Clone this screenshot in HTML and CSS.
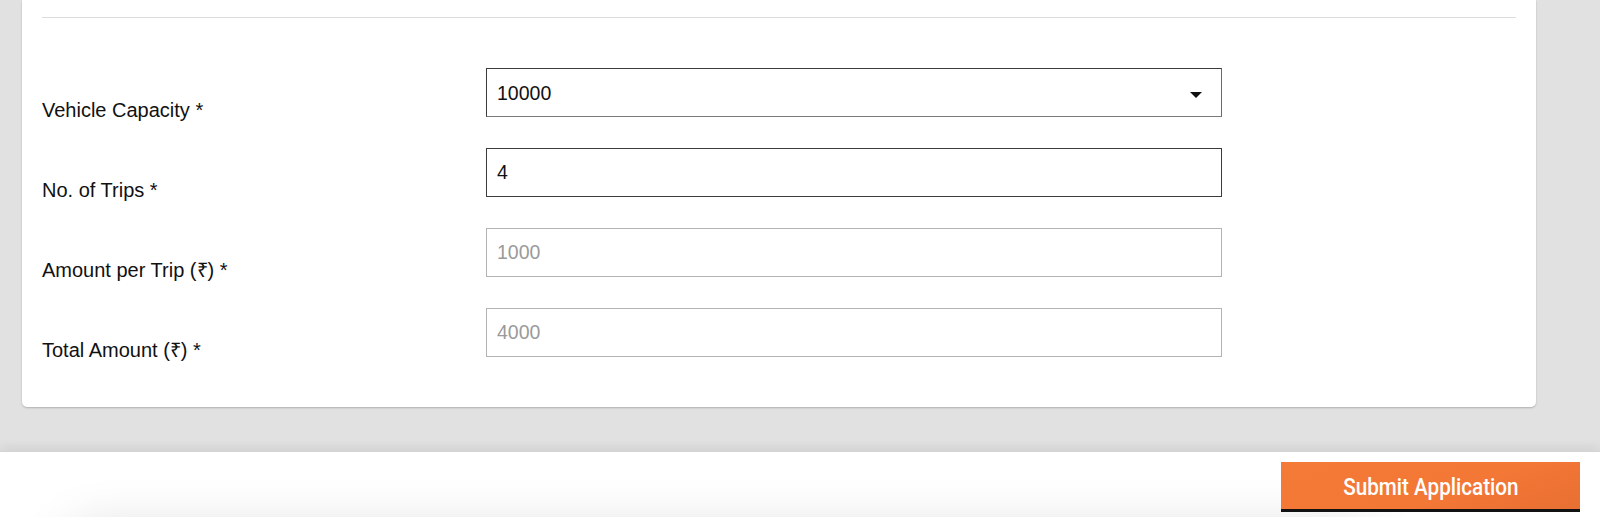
FILE: index.html
```html
<!DOCTYPE html>
<html lang="en">
<head>
<meta charset="utf-8">
<title>Application</title>
<link rel="stylesheet" href="styles.css">
</head>
<body>
<main class="page">
  <section class="card">
    <hr class="divider">
    <form class="form">
      <div class="row">
        <label class="label" for="cap">Vehicle Capacity *</label>
        <div class="select-wrap">
          <select id="cap" class="field select">
            <option>10000</option>
          </select>
          <svg class="caret" width="12" height="6" viewBox="0 0 12 6" aria-hidden="true"><path d="M0 0H12L6 6Z" fill="#111"/></svg>
        </div>
      </div>
      <div class="row">
        <label class="label" for="trips">No. of Trips *</label>
        <input id="trips" class="field" type="text" value="4">
      </div>
      <div class="row">
        <label class="label" for="amt">Amount per Trip (₹) *</label>
        <input id="amt" class="field disabled" type="text" value="1000" disabled>
      </div>
      <div class="row">
        <label class="label" for="total">Total Amount (₹) *</label>
        <input id="total" class="field disabled" type="text" value="4000" disabled>
      </div>
    </form>
  </section>
</main>
<footer class="footer">
  <button class="submit" type="button"><span class="submit-text">Submit Application</span></button>
</footer>
</body>
</html>
```
FILE: styles.css
```css
* { box-sizing: border-box; }

html, body {
  margin: 0;
  padding: 0;
  height: 100%;
}

body {
  background: #e1e1e1;
  font-family: "Liberation Sans", Arial, sans-serif;
  color: #1a1a1a;
  overflow: hidden;
}

.page {
  padding: 0 64px 0 22px;
  height: 451px;
}

.card {
  background: #fff;
  border-radius: 0 0 5px 5px;
  box-shadow: 0 1px 2px rgba(0, 0, 0, 0.22);
  padding: 17px 20px 0 20px;
  height: 407px;
}

.divider {
  margin: 0;
  border: 0;
  border-top: 1px solid #dcdcdc;
  height: 0;
}

.form {
  display: flex;
  flex-direction: column;
  gap: 25px;
  margin-top: 50px;
}

.row {
  display: grid;
  grid-template-columns: 444px 736px;
  align-items: start;
  height: 55px;
}

.label {
  padding-top: 30px;
  line-height: 24px;
  font-size: 20px;
  color: #111;
}

.field {
  display: block;
  width: 736px;
  height: 49px;
  margin: 0;
  padding: 0 10px;
  border: 1px solid #3b3b3b;
  border-radius: 0;
  background: #fff;
  font-family: "Liberation Sans", Arial, sans-serif;
  font-size: 19.5px;
  color: #111;
  outline: none;
}

.select-wrap {
  position: relative;
  width: 736px;
}

.select {
  appearance: none;
  -webkit-appearance: none;
  border-bottom-color: #7a7a7a;
  border-right-color: #6a6a6a;
}

.caret {
  position: absolute;
  right: 20px;
  top: 24px;
  pointer-events: none;
}

.field.disabled {
  border-color: #b3b3b3;
  color: #9a9a9a;
  -webkit-text-fill-color: #9a9a9a;
  opacity: 1;
}

.footer {
  position: relative;
  overflow: hidden;
  height: 66px;
  background: #fff;
  border-top: 1px solid #d4d4d4;
  box-shadow: 0 -4px 10px rgba(0, 0, 0, 0.07);
  display: flex;
  justify-content: flex-end;
  align-items: flex-start;
  padding: 10px 20px 0 0;
}

.footer::after {
  content: "";
  position: absolute;
  left: 80px;
  right: 240px;
  top: 95px;
  height: 40px;
  border-radius: 40px;
  box-shadow: 0 0 50px 22px rgba(0, 0, 0, 0.13);
}

.submit {
  position: relative;
  z-index: 1;
  width: 299px;
  height: 50px;
  margin: 0;
  padding: 0;
  border: 0;
  border-bottom: 3px solid #121212;
  background: linear-gradient(160deg, #f47a38 0%, #f37735 60%, #e86f33 100%);
  color: #fff;
  font-family: Roboto, "Liberation Sans", sans-serif;
  font-size: 24px;
  font-weight: 500;
  cursor: pointer;
  display: flex;
  align-items: center;
  justify-content: center;
}

.submit-text {
  display: inline-block;
  transform: scaleX(0.86);
  line-height: 1;
  margin-top: 2px;
  margin-left: 0;
}
```
